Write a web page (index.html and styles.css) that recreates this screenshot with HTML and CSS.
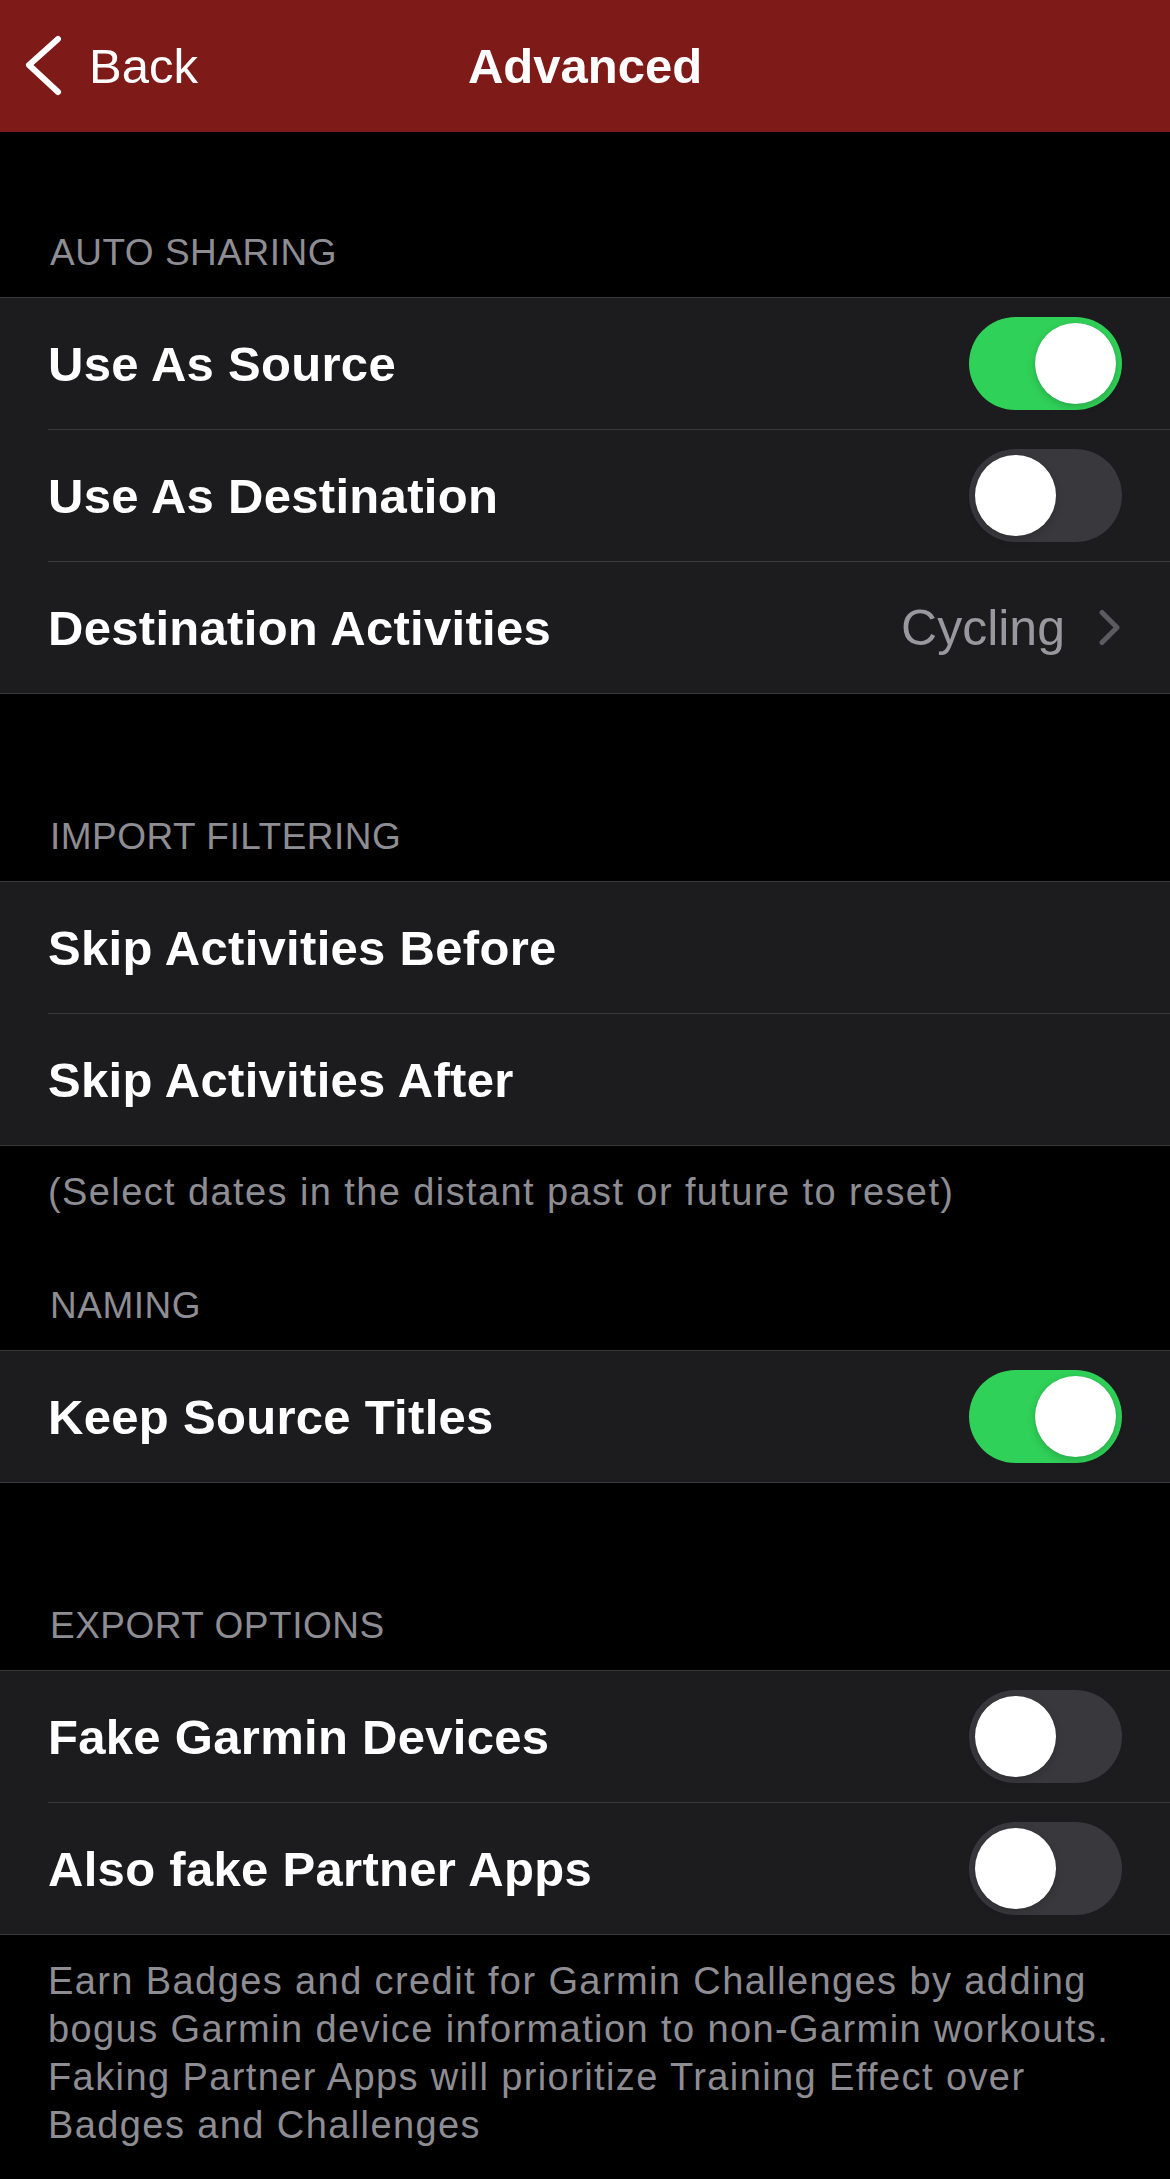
FILE: index.html
```html
<!DOCTYPE html>
<html lang="en">
<head>
<meta charset="utf-8">
<title>Advanced</title>
<link rel="stylesheet" href="styles.css">
</head>
<body>
<header class="navbar">
  <div class="nav-back">
    <svg class="back-chevron" width="40" height="64" viewBox="0 0 40 64" aria-hidden="true">
      <path d="M33 5 L4 31 L33 58" fill="none" stroke="#ffffff" stroke-width="6" stroke-linecap="round" stroke-linejoin="round"/>
    </svg>
    <span class="back-label">Back</span>
  </div>
  <h1 class="nav-title">Advanced</h1>
  <div class="nav-spacer"></div>
</header>

<main class="content">
  <section class="section">
    <div class="section-header first">AUTO SHARING</div>
    <div class="group">
      <div class="row">
        <div class="row-inner">
          <span class="row-label">Use As Source</span>
          <span class="switch on"><span class="knob"></span></span>
        </div>
      </div>
      <div class="row">
        <div class="row-inner sep">
          <span class="row-label">Use As Destination</span>
          <span class="switch"><span class="knob"></span></span>
        </div>
      </div>
      <div class="row">
        <div class="row-inner sep">
          <span class="row-label">Destination Activities</span>
          <span class="row-detail">
            <span class="detail-value">Cycling</span>
            <svg class="disclosure" width="24" height="38" viewBox="0 0 24 38" aria-hidden="true">
              <path d="M4 3.5 L19 18.5 L4 33.5" fill="none" stroke="#5b5b60" stroke-width="5" stroke-linecap="round" stroke-linejoin="round"/>
            </svg>
          </span>
        </div>
      </div>
    </div>
  </section>

  <section class="section">
    <div class="section-header">IMPORT FILTERING</div>
    <div class="group">
      <div class="row">
        <div class="row-inner">
          <span class="row-label">Skip Activities Before</span>
        </div>
      </div>
      <div class="row">
        <div class="row-inner sep">
          <span class="row-label">Skip Activities After</span>
        </div>
      </div>
    </div>
    <p class="section-footer">(Select dates in the distant past or future to reset)</p>
  </section>

  <section class="section">
    <div class="section-header after-footer">NAMING</div>
    <div class="group">
      <div class="row">
        <div class="row-inner">
          <span class="row-label">Keep Source Titles</span>
          <span class="switch on"><span class="knob"></span></span>
        </div>
      </div>
    </div>
  </section>

  <section class="section">
    <div class="section-header">EXPORT OPTIONS</div>
    <div class="group">
      <div class="row">
        <div class="row-inner">
          <span class="row-label">Fake Garmin Devices</span>
          <span class="switch"><span class="knob"></span></span>
        </div>
      </div>
      <div class="row">
        <div class="row-inner sep">
          <span class="row-label">Also fake Partner Apps</span>
          <span class="switch"><span class="knob"></span></span>
        </div>
      </div>
    </div>
    <p class="section-footer">Earn Badges and credit for Garmin Challenges by adding<br>bogus Garmin device information to non-Garmin workouts.<br>Faking Partner Apps will prioritize Training Effect over<br>Badges and Challenges</p>
  </section>
</main>
</body>
</html>
```

FILE: styles.css
```css
html {
  background: #000000;
}

body {
  margin: 0;
  background: #000000;
  color: #ffffff;
  font-family: "Liberation Sans", Arial, sans-serif;
  min-height: 2179px;
}

/* Navigation bar */
.navbar {
  height: 132px;
  background: #7e1b18;
  display: grid;
  grid-template-columns: 1fr auto 1fr;
  align-items: center;
}

.nav-back {
  display: flex;
  align-items: center;
  padding-left: 25px;
  gap: 24px;
}

.back-chevron {
  display: block;
  flex: none;
}

.back-label {
  font-size: 49px;
  line-height: 132px;
  color: #ffffff;
}

.nav-title {
  margin: 0;
  font-size: 49px;
  font-weight: 700;
  line-height: 132px;
  color: #ffffff;
  text-align: center;
}

/* Sections */
.content {
  display: flex;
  flex-direction: column;
}

.section-header {
  padding: 119px 48px 20px 50px;
  font-size: 37px;
  line-height: 48px;
  letter-spacing: 0.5px;
  color: #8d8d93;
}

.section-header.first {
  padding-top: 97px;
}

.section-header.after-footer {
  padding-top: 66px;
}

.section-footer {
  margin: 0;
  padding: 22px 40px 0 48px;
  font-size: 38px;
  line-height: 48px;
  letter-spacing: 1.4px;
  color: #8d8d93;
}

.group {
  background: #1c1c1e;
  border-top: 1px solid #38383a;
  border-bottom: 1px solid #38383a;
}

.row {
  padding-left: 48px;
}

.row-inner {
  height: 131px;
  display: flex;
  align-items: center;
  justify-content: space-between;
  padding-right: 48px;
}

.row-inner.sep {
  border-top: 1px solid #3a3a3d;
}

.row-label {
  font-size: 49px;
  font-weight: 700;
  letter-spacing: 0.3px;
  color: #ffffff;
  white-space: nowrap;
}

.row-detail {
  display: flex;
  align-items: center;
  gap: 33px;
}

.detail-value {
  font-size: 50px;
  color: #98989e;
}

.disclosure {
  display: block;
}

/* Switch */
.switch {
  flex: none;
  width: 153px;
  height: 93px;
  border-radius: 47px;
  background: #39393d;
  display: flex;
  align-items: center;
  justify-content: flex-start;
  padding: 0 6px;
  box-sizing: border-box;
}

.switch.on {
  background: #30d158;
  justify-content: flex-end;
}

.knob {
  width: 81px;
  height: 81px;
  border-radius: 50%;
  background: #ffffff;
  box-shadow: 0 3px 8px rgba(0, 0, 0, 0.18), 0 0 1px rgba(0, 0, 0, 0.2);
}
```
